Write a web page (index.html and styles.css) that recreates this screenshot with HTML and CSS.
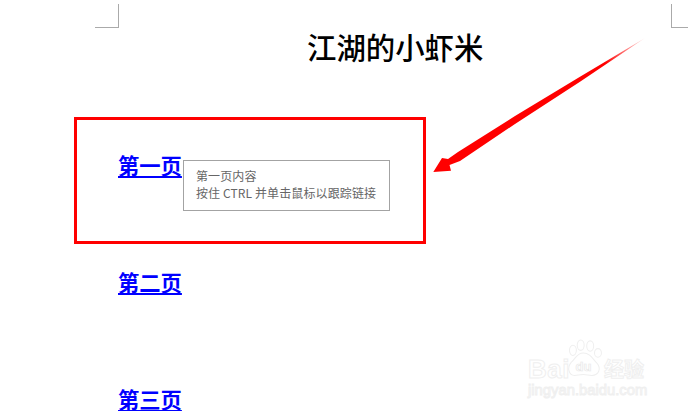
FILE: index.html
```html
<!DOCTYPE html>
<html lang="zh">
<head>
<meta charset="utf-8">
<title>江湖的小虾米</title>
<link rel="stylesheet" href="styles.css">
</head>
<body>
<main class="page">
  <span class="mark mark-left"></span>
  <span class="mark mark-right"></span>
  <h1 class="title">江湖的小虾米</h1>
  <ul class="links">
    <li><a href="#p1">第一页</a></li>
    <li><a href="#p2">第二页</a></li>
    <li><a href="#p3">第三页</a></li>
  </ul>
  <div class="tip">第一页内容<br>按住 CTRL 并单击鼠标以跟踪链接</div>
  <div class="frame"></div>
  <svg class="arrow" width="688" height="411" viewBox="0 0 688 411" aria-hidden="true">
    <defs>
      <linearGradient id="fade" gradientUnits="userSpaceOnUse" x1="645" y1="38" x2="605" y2="63">
        <stop offset="0" stop-color="#ff0000" stop-opacity=".1"/>
        <stop offset="1" stop-color="#ff0000"/>
      </linearGradient>
    </defs>
    <path d="M645 38 L580 76.700 L515 116 L458 152 L448 159 L442 158 L433.300 172 L451 170.700 L449.500 165 L460 161 L515 124 L580 81.700 Z" fill="url(#fade)"/>
  </svg>
  <div class="wm" aria-hidden="true">
    <div class="wm-top">
      <span class="wm-bai">Bai</span>
      <svg class="paw" width="38" height="44" viewBox="0 0 44 46">
        <g fill="#fff" stroke="#efefef" stroke-width="1.200">
          <ellipse cx="8" cy="13" rx="4" ry="6"/>
          <ellipse cx="17" cy="7" rx="4" ry="6"/>
          <ellipse cx="28" cy="8" rx="4" ry="6"/>
          <ellipse cx="37" cy="16" rx="4" ry="5"/>
          <path d="M20 16c8 0 11 7 16 12 5 6 2 14-6 14-4 0-6-1-10-1s-7 1-10 1C3 42 1 33 6 27c5-4 6-11 14-11Z"/>
        </g>
        <text x="11" y="37" class="paw-text">du</text>
      </svg>
      <span class="wm-cn">经验</span>
    </div>
    <div class="wm-url">jingyan.baidu.com</div>
  </div>
</main>
</body>
</html>
```
FILE: styles.css
```css
html, body {
  margin: 0;
  padding: 0;
  background: #fff;
}
.page {
  position: relative;
  width: 688px;
  height: 411px;
  overflow: hidden;
  padding: 31px 0 0 118px;
  box-sizing: border-box;
  font-family: "Liberation Serif", "Noto Sans CJK SC", serif;
}
.title {
  margin: 0 0 0 189px;
  font-size: 29.400px;
  line-height: 36px;
  font-weight: 500;
  color: #000;
}
.links {
  list-style: none;
  margin: 87px 0 0;
  padding: 0;
  display: flex;
  flex-direction: column;
  gap: 90px;
}
.links li {
  height: 27px;
  line-height: 27px;
  font-size: 21.300px;
  font-weight: 700;
}
.links a {
  color: #0000ff;
  text-decoration: underline;
  text-underline-offset: 2px;
}
.mark {
  position: absolute;
  top: 4px;
  height: 23px;
  border-bottom: 1px solid #aaa;
}
.mark-left {
  left: 95px;
  width: 23px;
  border-right: 1px solid #aaa;
}
.mark-right {
  left: 671px;
  width: 17px;
  border-left: 1px solid #aaa;
}
.tip {
  position: absolute;
  left: 183px;
  top: 160px;
  width: 181px;
  height: 33px;
  padding: 6px 12px 10px 12px;
  border: 1px solid #a3a3a3;
  background: #fff;
  color: #666;
  font: 12px/17px "Noto Sans CJK SC", sans-serif;
  letter-spacing: .11px;
  white-space: nowrap;
}
.frame {
  position: absolute;
  left: 74px;
  top: 117px;
  width: 346px;
  height: 121px;
  border: 3px solid #ff0000;
}
.arrow {
  position: absolute;
  left: 0;
  top: 0;
}
.wm {
  position: absolute;
  left: 528px;
  top: 337px;
  width: 125px;
  font-family: "Liberation Sans", sans-serif;
  color: #fff;
  -webkit-text-stroke: 1px #efefef;
}
.wm-top {
  display: flex;
  align-items: flex-end;
  height: 44px;
  font-size: 26px;
  line-height: 24px;
  font-weight: 700;
}
.wm-bai {
  letter-spacing: .5px;
}
.paw {
  flex: none;
  margin: 0 0 0 -4px;
}
.paw-text {
  font: 700 15px "Liberation Sans", sans-serif;
  fill: #fff;
  stroke: #e8e8e8;
  stroke-width: .8px;
}
.wm-cn {
  font: 700 20px/24px "Noto Sans CJK SC", sans-serif;
}
.wm-url {
  font-size: 14.800px;
  line-height: 16px;
  margin-top: 1px;
  white-space: nowrap;
}
```
